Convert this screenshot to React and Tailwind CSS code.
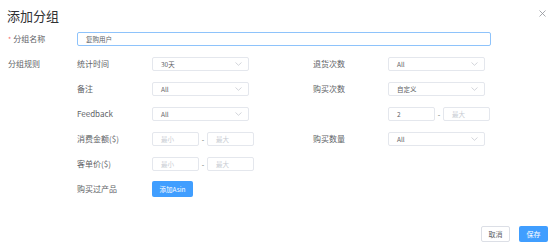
import React from "react";

const font = { fontFamily: '"Noto Sans CJK SC", "Noto Sans", sans-serif' };

function Chevron() {
  return (
    <svg width="7" height="4" viewBox="0 0 7 4" className="shrink-0">
      <path d="M0.5 0.5 L3.5 3.3 L6.5 0.5" fill="none" stroke="#c0c4cc" strokeWidth="0.7" />
    </svg>
  );
}

function Select({ value }) {
  return (
    <div className="w-[97px] h-[14px] border border-[#e4e7ed] rounded-[2px] flex items-center justify-between pl-[8px] pr-[6px] bg-white">
      <span className="text-[6.5px] leading-none text-[#606266]">{value}</span>
      <Chevron />
    </div>
  );
}

function NumInput({ value, placeholder }) {
  return (
    <div className="w-[47px] h-[14px] border border-[#e4e7ed] rounded-[2px] flex items-center pl-[8px] bg-white">
      {value ? (
        <span className="text-[6.5px] leading-none text-[#606266]">{value}</span>
      ) : (
        <span className="text-[6.5px] leading-none text-[#c8ccd3]">{placeholder}</span>
      )}
    </div>
  );
}

function Range({ min }) {
  return (
    <div className="flex items-center">
      <NumInput value={min} placeholder="最小" />
      <div className="w-[8px] flex justify-center text-[7px] leading-none text-[#606266]">-</div>
      <NumInput placeholder="最大" />
    </div>
  );
}

function Label({ children }) {
  return <div className="w-[75px] shrink-0 text-[8px] leading-none text-[#606266]">{children}</div>;
}

function Row({ l1, c1, l2, c2 }) {
  return (
    <div className="h-[14px] flex items-center">
      <div className="w-[172px] flex items-center">
        <Label>{l1}</Label>
        {c1}
      </div>
      <div className="w-[64px]" />
      <div className="flex items-center">
        <Label>{l2}</Label>
        {c2}
      </div>
    </div>
  );
}

export default function App() {
  return (
    <div className="w-[554px] h-[248px] bg-white flex flex-col" style={font}>
      <div className="flex items-center justify-between pl-[7px] pr-[8px] pt-[7px] h-[24px]">
        <div className="text-[13px] leading-none text-[#303133]">添加分组</div>
        <svg width="7" height="7" viewBox="0 0 7 7" className="mt-[-4px]">
          <path d="M0.5 0.5 L6.5 6.5 M6.5 0.5 L0.5 6.5" stroke="#909399" strokeWidth="0.8" />
        </svg>
      </div>
      <div className="pl-[8px] mt-[8px] flex flex-col">
        <div className="h-[14px] flex items-center">
          <div className="w-[69px] text-[8px] leading-none text-[#606266] flex items-center">
            <span className="text-[#f56c6c] mr-[2px] text-[7px]">*</span>分组名称
          </div>
          <div className="w-[414px] h-[14px] border border-[#8ec3fb] rounded-[2px] flex items-center pl-[8px]">
            <span className="text-[6.5px] leading-none text-[#606266]">复购用户</span>
          </div>
        </div>
        <div className="flex mt-[11px]">
          <div className="w-[69px] h-[14px] flex items-center text-[8px] leading-none text-[#606266]">分组规则</div>
          <div className="flex flex-col gap-[11px]">
            <Row l1="统计时间" c1={<Select value="30天" />} l2="退货次数" c2={<Select value="All" />} />
            <Row l1="备注" c1={<Select value="All" />} l2="购买次数" c2={<Select value="自定义" />} />
            <Row l1="Feedback" c1={<Select value="All" />} l2="" c2={<Range min="2" />} />
            <Row l1="消费金额($)" c1={<Range />} l2="购买数量" c2={<Select value="All" />} />
            <Row l1="客单价($)" c1={<Range />} l2="" c2={null} />
            <div className="h-[14px] flex items-center">
              <Label>购买过产品</Label>
              <div className="w-[41px] h-[16px] shrink-0 bg-[#409eff] rounded-[2px] flex items-center justify-center text-[6.5px] leading-none text-white">
                添加Asin
              </div>
            </div>
          </div>
        </div>
      </div>
      <div className="flex justify-end gap-[9px] pr-[6px] mt-[30px]">
        <div className="w-[29px] h-[16px] border border-[#dcdfe6] rounded-[2px] flex items-center justify-center text-[7px] leading-none text-[#606266]">
          取消
        </div>
        <div className="w-[29px] h-[16px] bg-[#409eff] rounded-[2px] flex items-center justify-center text-[7px] leading-none text-white">
          保存
        </div>
      </div>
    </div>
  );
}
